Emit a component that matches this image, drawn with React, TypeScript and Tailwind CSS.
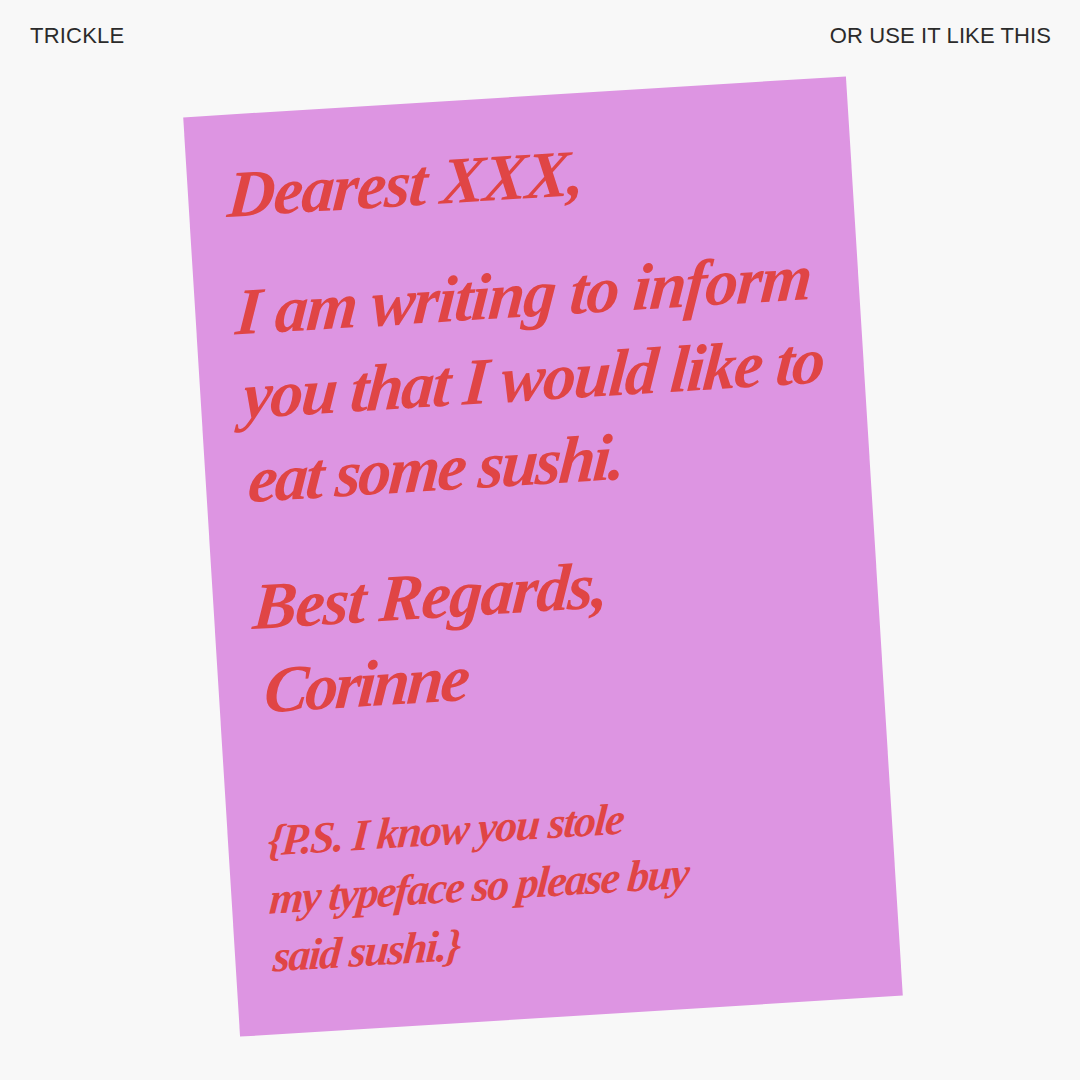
const serif = "font-['Liberation_Serif',serif] italic font-bold";

function Line({ text, className }: { text: string; className?: string }) {
  return <span className={`block origin-left whitespace-nowrap -skew-x-[8deg] ${className ?? ""}`}>{text}</span>;
}

export default function App() {
  return (
    <div className="h-[1080px] w-full overflow-hidden bg-[#f8f8f8]">
      <header className="flex items-center justify-between pl-[30px] pr-[29px] pt-[23px] font-['Liberation_Sans',sans-serif] text-[22px] leading-[26px] text-[#2b2b2b]">
        <span className="tracking-[0.2px]">TRICKLE</span>
        <span className="tracking-[0.1px]">OR USE IT LIKE THIS</span>
      </header>

      <div className="ml-[211px] mt-[47px] h-[921px] w-[664px] -rotate-[3.54deg] bg-[#dd95e2] px-[40px] pt-[38px] text-[#e04545]">
        <div className={`${serif} text-[66px] leading-[84px] tracking-[-1.5px]`}>
          <Line text="Dearest XXX," />
          <div className="mt-[34px]">
            <Line text="I am writing to inform" className="ml-[1px]" />
            <Line text="you that I would like to" className="ml-[3px] tracking-[-2px]" />
            <Line text="eat some sushi." className="ml-[3px] tracking-[-2.5px]" />
          </div>
          <div className="mt-[43px]">
            <Line text="Best Regards," />
            <Line text="Corinne" className="ml-[6px] tracking-[-3px]" />
          </div>
        </div>
        <div className={`${serif} mt-[80px] text-[44px] leading-[58px] tracking-[-1.6px]`}>
          <Line text="{P.S. I know you stole" />
          <Line text="my typeface so please buy" className="-ml-[2px] tracking-[-1.8px]" />
          <Line text="said sushi.}" className="-ml-[2px]" />
        </div>
      </div>
    </div>
  );
}
